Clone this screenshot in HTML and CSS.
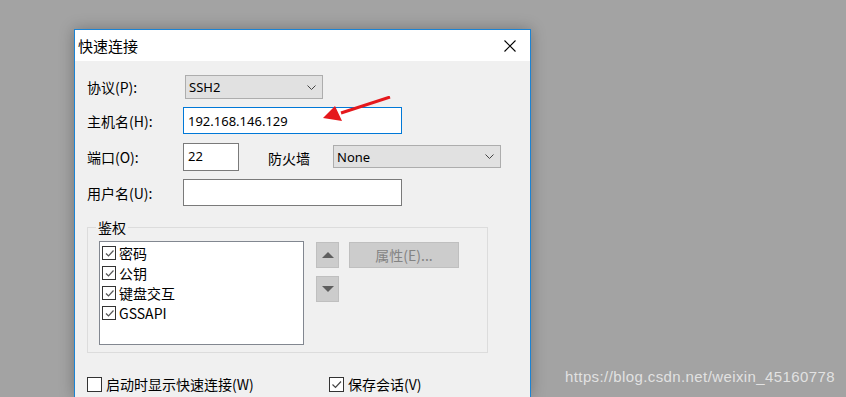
FILE: index.html
```html
<!DOCTYPE html>
<html lang="zh-CN">
<head>
    <meta charset="UTF-8">
    <title>快速连接</title>
    <link rel="stylesheet" href="styles.css">
</head>
<body>
    <div class="dialog">
        <div class="titlebar">
            <span class="title">快速连接</span>
            <svg class="close" width="12" height="12" viewBox="0 0 12 12">
                <path d="M0.5 0.5 L11.5 11.5 M11.5 0.5 L0.5 11.5" stroke="#000" stroke-width="1.1" fill="none"/>
            </svg>
        </div>
        <div class="content">
            <div class="row row-proto">
                <span class="lbl">协议(P):</span>
                <div class="select sel-proto">
                    <span>SSH2</span>
                    <svg class="chev" width="9" height="5" viewBox="0 0 9 5"><path d="M0.5 0.5 L4.5 4.5 L8.5 0.5" stroke="#444" fill="none"/></svg>
                </div>
            </div>
            <div class="row row-host">
                <span class="lbl">主机名(H):</span>
                <div class="input input-host focused">192.168.146.129</div>
            </div>
            <div class="row row-port">
                <span class="lbl">端口(O):</span>
                <div class="input input-port">22</div>
                <span class="lbl-fw">防火墙</span>
                <div class="select sel-fw">
                    <span>None</span>
                    <svg class="chev" width="9" height="5" viewBox="0 0 9 5"><path d="M0.5 0.5 L4.5 4.5 L8.5 0.5" stroke="#444" fill="none"/></svg>
                </div>
            </div>
            <div class="row row-user">
                <span class="lbl">用户名(U):</span>
                <div class="input input-user"></div>
            </div>

            <div class="group">
                <div class="group-title">鉴权</div>
                <div class="group-body">
                    <div class="listbox">
                        <div class="item"><span class="cb small"><svg width="11" height="11" viewBox="0 0 11 11"><path d="M2 5.5 L4.5 8 L9.5 2.5" stroke="#555" stroke-width="1.2" fill="none"/></svg></span>密码</div>
                        <div class="item"><span class="cb small"><svg width="11" height="11" viewBox="0 0 11 11"><path d="M2 5.5 L4.5 8 L9.5 2.5" stroke="#555" stroke-width="1.2" fill="none"/></svg></span>公钥</div>
                        <div class="item"><span class="cb small"><svg width="11" height="11" viewBox="0 0 11 11"><path d="M2 5.5 L4.5 8 L9.5 2.5" stroke="#555" stroke-width="1.2" fill="none"/></svg></span>键盘交互</div>
                        <div class="item"><span class="cb small"><svg width="11" height="11" viewBox="0 0 11 11"><path d="M2 5.5 L4.5 8 L9.5 2.5" stroke="#555" stroke-width="1.2" fill="none"/></svg></span>GSSAPI</div>
                    </div>
                    <div class="arrows">
                        <div class="btn-sq">
                            <svg width="12" height="6" viewBox="0 0 12 6"><path d="M6 0 L12 6 L0 6 Z" fill="#5e5e5e"/></svg>
                        </div>
                        <div class="btn-sq">
                            <svg width="12" height="6" viewBox="0 0 12 6"><path d="M0 0 L12 0 L6 6 Z" fill="#5e5e5e"/></svg>
                        </div>
                    </div>
                    <div class="btn-props">属性(E)...</div>
                </div>
            </div>

            <div class="row row-bottom">
                <div class="check check-startup"><span class="cb"></span>启动时显示快速连接(W)</div>
                <div class="check"><span class="cb"><svg width="13" height="13" viewBox="0 0 13 13"><path d="M2.5 6.5 L5.5 9.5 L11 3.5" stroke="#444" stroke-width="1.2" fill="none"/></svg></span>保存会话(V)</div>
            </div>
        </div>
    </div>

    <!-- annotation arrow drawn over the screenshot -->
    <svg class="annot" width="80" height="30" viewBox="0 0 80 30">
        <path d="M69 1 L20 17" stroke="#e5181c" stroke-width="3" fill="none"/>
        <path d="M2 22 L14 10 L21 25 Z" fill="#e5181c"/>
    </svg>

    <div class="watermark">https://blog.csdn.net/weixin_45160778</div>
</body>
</html>
```

FILE: styles.css
```css
*{
    margin: 0px;
    padding: 0px;
    box-sizing: border-box;
}
body {
    background-color: #a3a3a3;
    height: 397px;
    overflow: hidden;
    font-family: "Noto Sans", "Noto Sans CJK SC", sans-serif;
    font-size: 13px;
    color: #000;
}
.dialog {
    width: 457px;
    height: 368px;
    margin-left: 74px;
    margin-top: 29px;
    border: 1px solid #1a83d4;
    border-bottom: none;
    background-color: #f0f0f0;
    box-shadow: 0 0 14px rgba(0, 0, 0, 0.28);
}
.titlebar {
    height: 31px;
    background-color: #fff;
    display: flex;
    align-items: center;
    justify-content: space-between;
    padding: 0 14px 0 3px;
}
.title {
    font-family: "Noto Sans CJK SC", sans-serif;
    font-size: 15px;
    line-height: 18px;
}
.content {
    padding: 14px 0 0 12px;
}
.row {
    display: flex;
    align-items: center;
}
.row-host { margin-top: 8px; }
.row-port { margin-top: 9px; align-items: flex-start; }
.row-user { margin-top: 8px; }
.lbl {
    width: 96px;
    font-family: "Noto Sans CJK SC", sans-serif;
    font-size: 14px;
    line-height: 18px;
}
.row-port .lbl { margin-top: 5px; }
.lbl-fw {
    font-family: "Noto Sans CJK SC", sans-serif;
    font-size: 14px;
    line-height: 18px;
    margin: 6px 23px 0 29px;
}
.select {
    height: 24px;
    background-color: #e1e1e1;
    border: 1px solid #adadad;
    display: flex;
    align-items: center;
    justify-content: space-between;
    padding: 0 6px 0 3px;
    font-size: 13px;
}
.sel-proto {
    width: 138px;
    margin-left: 2px;
}
.sel-fw {
    width: 168px;
    height: 23px;
    margin-top: 2px;
}
.input {
    height: 27px;
    background-color: #fff;
    border: 1px solid #7a7a7a;
    padding: 0 4px;
    display: flex;
    align-items: center;
    font-size: 13px;
}
.input.focused { border-color: #0078d7; }
.input-host, .input-user { width: 219px; }
.input-port {
    width: 56px;
    height: 28px;
    align-items: flex-start;
    padding-top: 3px;
}
.group {
    margin-top: 21px;
    width: 401px;
    border: 1px solid #dcdcdc;
    padding: 0 11px 7px 11px;
}
.group-title {
    width: fit-content;
    margin: -9px 0 0 -3px;
    padding: 0 2px;
    background-color: #f0f0f0;
    font-family: "Noto Sans CJK SC", sans-serif;
    font-size: 14px;
    line-height: 16px;
}
.group-body {
    display: flex;
    align-items: flex-start;
    margin-top: 6px;
}
.listbox {
    width: 205px;
    height: 104px;
    background-color: #fff;
    border: 1px solid #828790;
    padding: 1px 0 0 2px;
}
.item {
    display: flex;
    align-items: center;
    height: 20px;
    font-family: "Noto Sans CJK SC", sans-serif;
    font-size: 14px;
}
.cb {
    width: 15px;
    height: 15px;
    border: 1px solid #333;
    background-color: #fff;
    display: flex;
    align-items: center;
    justify-content: center;
    margin-right: 4px;
}
.cb.small {
    width: 14px;
    height: 14px;
    margin-right: 3px;
}
.arrows {
    display: flex;
    flex-direction: column;
    gap: 8px;
    margin: 1px 0 0 12px;
}
.btn-sq {
    width: 23px;
    height: 26px;
    background-color: #cccccc;
    border: 1px solid #bfbfbf;
    display: flex;
    align-items: center;
    justify-content: center;
}
.btn-props {
    width: 110px;
    height: 26px;
    margin: 1px 0 0 10px;
    background-color: #cccccc;
    border: 1px solid #bfbfbf;
    color: #838383;
    font-family: "Noto Sans CJK SC", sans-serif;
    font-size: 14px;
    display: flex;
    align-items: center;
    justify-content: center;
}
.row-bottom { margin-top: 23px; }
.check {
    display: flex;
    align-items: center;
    font-family: "Noto Sans CJK SC", sans-serif;
    font-size: 14px;
    line-height: 16px;
}
.check-startup { width: 242px; }
.annot {
    position: absolute;
    left: 321px;
    top: 96px;
}
.watermark {
    position: absolute;
    left: 565px;
    top: 368px;
    font-family: "Liberation Sans", sans-serif;
    font-size: 15px;
    letter-spacing: 0.4px;
    color: rgba(238, 238, 238, 0.85);
}
```
